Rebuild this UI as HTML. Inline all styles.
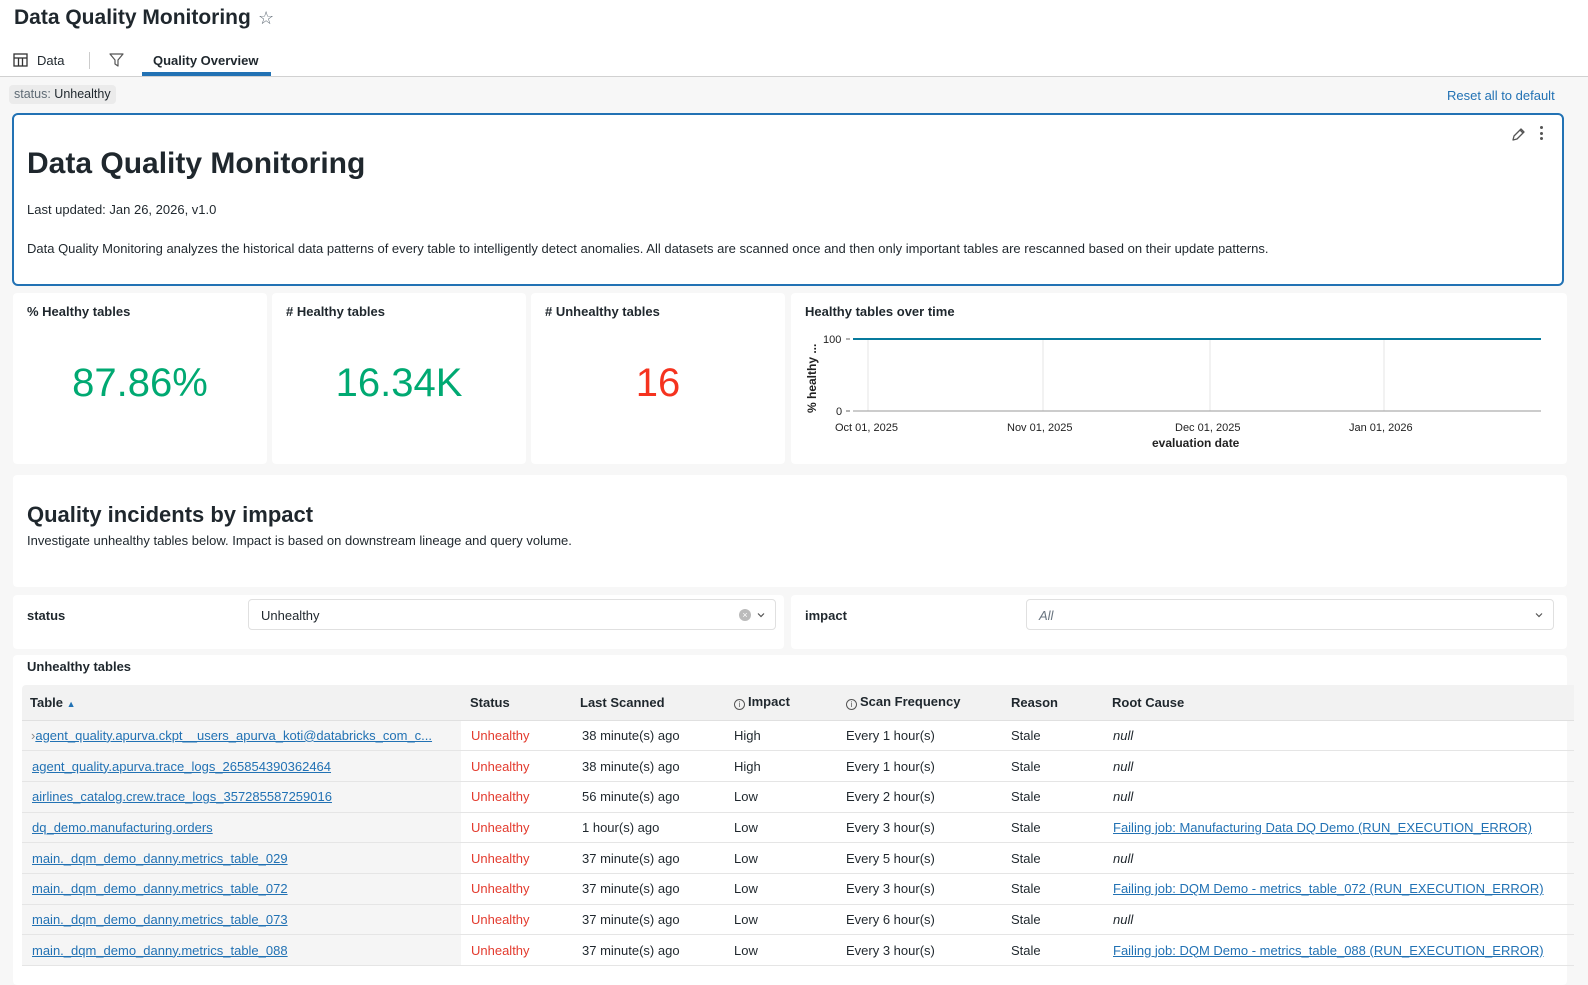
<!DOCTYPE html>
<html><head><meta charset="utf-8"><style>
*{box-sizing:border-box;margin:0;padding:0}
body{width:1588px;height:976px;overflow:hidden;background:#f7f7f7;font-family:"Liberation Sans",Arial,sans-serif;color:#1f272d;position:relative}
.abs{position:absolute}
.card{position:absolute;background:#fff;border-radius:4px}
.top{position:absolute;left:0;top:0;width:1588px;height:77px;background:#fff;border-bottom:1px solid #d1d1d1}
.lnk{color:#2272b4;text-decoration:underline}
table{border-collapse:collapse;font-size:13px}
td,th{height:30.7px;border-bottom:1px solid #e5e5e5;text-align:left;white-space:nowrap;overflow:hidden;vertical-align:middle}
th{height:35px;background:#f2f2f2;font-weight:bold;border-bottom:1px solid #e0e0e0}
td.c1{background:#f5f5f5}
.red{color:#e33b2e}
.ic{display:inline-block;width:11px;height:11px;border:1px solid #555;border-radius:50%;font-size:8px;line-height:9px;text-align:center;font-weight:normal;vertical-align:-1px;margin-right:3px;color:#555}
</style></head><body>
<div class="top">
  <div class="abs" style="left:14px;top:6px;font-size:21px;font-weight:bold;color:#1f272d">Data Quality Monitoring</div>
  <div class="abs" style="left:258px;top:8px;font-size:18px;color:#5f6b75">☆</div>
  <svg class="abs" style="left:13px;top:53px" width="15" height="14" viewBox="0 0 15 14"><rect x="1" y="1" width="13" height="12" fill="none" stroke="#333" stroke-width="1.3"/><line x1="1" y1="5" x2="14" y2="5" stroke="#333" stroke-width="1.3"/><line x1="5.5" y1="5" x2="5.5" y2="13" stroke="#333" stroke-width="1.3"/><line x1="9.5" y1="5" x2="9.5" y2="13" stroke="#333" stroke-width="1.3"/></svg>
  <div class="abs" style="left:37px;top:53px;font-size:13px">Data</div>
  <div class="abs" style="left:89px;top:52px;width:1px;height:17px;background:#ccc"></div>
  <svg class="abs" style="left:109px;top:53px" width="15" height="14" viewBox="0 0 15 14"><path d="M1 1h13L9 7v6L6 11V7z" fill="none" stroke="#555" stroke-width="1.2" stroke-linejoin="round"/></svg>
  <div class="abs" style="left:153px;top:53px;font-size:13px;font-weight:bold">Quality Overview</div>
  <div class="abs" style="left:142px;top:72px;width:129px;height:4px;background:#2272b4"></div>
</div>
<div class="abs" style="left:9px;top:85px;height:19px;padding:0 5px;background:#ebebeb;border-radius:4px;font-size:12.5px;line-height:19px"><span style="color:#5f6b75">status:</span> Unhealthy</div>
<div class="abs" style="left:1447px;top:88px;font-size:13px;color:#2272b4">Reset all to default</div>

<div class="card" style="left:12px;top:113px;width:1552px;height:173px;border:2px solid #2272b4;border-radius:6px">
  <div class="abs" style="left:13px;top:32px;font-size:30px;font-weight:bold">Data Quality Monitoring</div>
  <div class="abs" style="left:13px;top:87px;font-size:13px">Last updated: Jan 26, 2026, v1.0</div>
  <div class="abs" style="left:13px;top:126px;font-size:13px">Data Quality Monitoring analyzes the historical data patterns of every table to intelligently detect anomalies. All datasets are scanned once and then only important tables are rescanned based on their update patterns.</div>
  <svg class="abs" style="left:1496px;top:12px" width="16" height="16" viewBox="0 0 16 16"><path d="M3 13l1-4 7-7 3 3-7 7z M10 3l3 3" fill="none" stroke="#555" stroke-width="1.3" stroke-linejoin="round"/></svg>
  <div class="abs" style="left:1526px;top:11px;width:4px"><div style="width:3px;height:3px;border-radius:50%;background:#555;margin-bottom:2.5px"></div><div style="width:3px;height:3px;border-radius:50%;background:#555;margin-bottom:2.5px"></div><div style="width:3px;height:3px;border-radius:50%;background:#555"></div></div>
</div>

<div class="card" style="left:13px;top:293px;width:254px;height:171px"><div class="abs" style="left:14px;top:11px;font-size:13px;font-weight:bold">% Healthy tables</div><div class="abs" style="left:0;width:254px;text-align:center;top:68px;font-size:40px;color:#00a972">87.86%</div></div>
<div class="card" style="left:272px;top:293px;width:254px;height:171px"><div class="abs" style="left:14px;top:11px;font-size:13px;font-weight:bold"># Healthy tables</div><div class="abs" style="left:0;width:254px;text-align:center;top:68px;font-size:40px;color:#00a972">16.34K</div></div>
<div class="card" style="left:531px;top:293px;width:254px;height:171px"><div class="abs" style="left:14px;top:11px;font-size:13px;font-weight:bold"># Unhealthy tables</div><div class="abs" style="left:0;width:254px;text-align:center;top:68px;font-size:40px;color:#f5331f">16</div></div>
<div class="card" style="left:791px;top:293px;width:776px;height:171px">
  <div class="abs" style="left:14px;top:11px;font-size:13px;font-weight:bold">Healthy tables over time</div>
  <svg class="abs" style="left:0;top:0" width="776" height="171">
    <g stroke="#e5e5e5" stroke-width="1"><line x1="77" y1="46" x2="77" y2="118"/><line x1="252" y1="46" x2="252" y2="118"/><line x1="419" y1="46" x2="419" y2="118"/><line x1="593" y1="46" x2="593" y2="118"/></g>
    <line x1="62" y1="118" x2="750" y2="118" stroke="#999"/>
    <line x1="62" y1="46" x2="750" y2="46" stroke="#077a9d" stroke-width="2"/>
    <line x1="55" y1="46" x2="59" y2="46" stroke="#666"/><line x1="55" y1="118" x2="59" y2="118" stroke="#666"/>
    <g font-family="Liberation Sans" font-size="11" fill="#222"><text x="32" y="50">100</text><text x="45" y="122">0</text>
    <text x="44" y="138">Oct 01, 2025</text><text x="216" y="138">Nov 01, 2025</text><text x="384" y="138">Dec 01, 2025</text><text x="558" y="138">Jan 01, 2026</text>
    <text x="361" y="154" font-weight="bold" font-size="12">evaluation date</text>
    <text transform="translate(25,120) rotate(-90)" font-weight="bold" font-size="12">% healthy ...</text></g>
  </svg>
</div>

<div class="card" style="left:13px;top:475px;width:1554px;height:112px">
  <div class="abs" style="left:14px;top:27px;font-size:22px;font-weight:bold">Quality incidents by impact</div>
  <div class="abs" style="left:14px;top:58px;font-size:13px">Investigate unhealthy tables below. Impact is based on downstream lineage and query volume.</div>
</div>

<div class="card" style="left:13px;top:595px;width:771px;height:54px">
  <div class="abs" style="left:14px;top:13px;font-size:13px;font-weight:bold">status</div>
  <div class="abs" style="left:235px;top:4px;width:528px;height:31px;border:1px solid #e0e0e0;border-radius:4px;font-size:13px;padding:8px 12px">Unhealthy
    <div class="abs" style="left:490px;top:9px;width:12px;height:12px;border-radius:50%;background:#bbb;color:#fff;font-size:9px;line-height:12px;text-align:center">×</div>
    <svg class="abs" style="left:507px;top:10px" width="10" height="10" viewBox="0 0 10 10"><path d="M2 3.5l3 3 3-3" fill="none" stroke="#555" stroke-width="1.2"/></svg></div>
</div>
<div class="card" style="left:791px;top:595px;width:776px;height:54px">
  <div class="abs" style="left:14px;top:13px;font-size:13px;font-weight:bold">impact</div>
  <div class="abs" style="left:235px;top:4px;width:528px;height:31px;border:1px solid #e0e0e0;border-radius:4px;font-size:13px;padding:8px 12px;color:#6a7580;font-style:italic">All
    <svg class="abs" style="left:507px;top:10px" width="10" height="10" viewBox="0 0 10 10"><path d="M2 3.5l3 3 3-3" fill="none" stroke="#555" stroke-width="1.2"/></svg></div>
</div>

<div class="card" style="left:13px;top:655px;width:1554px;height:330px">
  <div class="abs" style="left:14px;top:4px;font-size:13px;font-weight:bold">Unhealthy tables</div>
  <table class="abs" style="left:9px;top:30px;width:1552px;table-layout:fixed">
    <colgroup><col style="width:439px"><col style="width:109px"><col style="width:152px"><col style="width:113px"><col style="width:164px"><col style="width:101px"><col></colgroup>
    <tr><th style="padding-left:8px;border-radius:4px 0 0 0">Table <span style="color:#2272b4;font-size:9px">▲</span></th><th style="padding-left:9px">Status</th><th style="padding-left:10px">Last Scanned</th><th style="padding-left:12px"><span class="ic">i</span>Impact</th><th style="padding-left:11px"><span class="ic">i</span>Scan Frequency</th><th style="padding-left:12px">Reason</th><th style="padding-left:12px">Root Cause</th></tr>
    <tr><td class="c1" style="padding-left:9px"><span style="color:#888">›</span><span class="lnk">agent_quality.apurva.ckpt__users_apurva_koti@databricks_com_c...</span></td><td class="red" style="padding-left:10px">Unhealthy</td><td style="padding-left:12px">38 minute(s) ago</td><td style="padding-left:12px">High</td><td style="padding-left:11px">Every 1 hour(s)</td><td style="padding-left:12px">Stale</td><td style="padding-left:13px;font-style:italic">null</td></tr>
    <tr><td class="c1" style="padding-left:10px"><span class="lnk">agent_quality.apurva.trace_logs_265854390362464</span></td><td class="red" style="padding-left:10px">Unhealthy</td><td style="padding-left:12px">38 minute(s) ago</td><td style="padding-left:12px">High</td><td style="padding-left:11px">Every 1 hour(s)</td><td style="padding-left:12px">Stale</td><td style="padding-left:13px;font-style:italic">null</td></tr>
    <tr><td class="c1" style="padding-left:10px"><span class="lnk">airlines_catalog.crew.trace_logs_357285587259016</span></td><td class="red" style="padding-left:10px">Unhealthy</td><td style="padding-left:12px">56 minute(s) ago</td><td style="padding-left:12px">Low</td><td style="padding-left:11px">Every 2 hour(s)</td><td style="padding-left:12px">Stale</td><td style="padding-left:13px;font-style:italic">null</td></tr>
    <tr><td class="c1" style="padding-left:10px"><span class="lnk">dq_demo.manufacturing.orders</span></td><td class="red" style="padding-left:10px">Unhealthy</td><td style="padding-left:12px">1 hour(s) ago</td><td style="padding-left:12px">Low</td><td style="padding-left:11px">Every 3 hour(s)</td><td style="padding-left:12px">Stale</td><td style="padding-left:13px"><span class="lnk">Failing job: Manufacturing Data DQ Demo (RUN_EXECUTION_ERROR)</span></td></tr>
    <tr><td class="c1" style="padding-left:10px"><span class="lnk">main._dqm_demo_danny.metrics_table_029</span></td><td class="red" style="padding-left:10px">Unhealthy</td><td style="padding-left:12px">37 minute(s) ago</td><td style="padding-left:12px">Low</td><td style="padding-left:11px">Every 5 hour(s)</td><td style="padding-left:12px">Stale</td><td style="padding-left:13px;font-style:italic">null</td></tr>
    <tr><td class="c1" style="padding-left:10px"><span class="lnk">main._dqm_demo_danny.metrics_table_072</span></td><td class="red" style="padding-left:10px">Unhealthy</td><td style="padding-left:12px">37 minute(s) ago</td><td style="padding-left:12px">Low</td><td style="padding-left:11px">Every 3 hour(s)</td><td style="padding-left:12px">Stale</td><td style="padding-left:13px"><span class="lnk">Failing job: DQM Demo - metrics_table_072 (RUN_EXECUTION_ERROR)</span></td></tr>
    <tr><td class="c1" style="padding-left:10px"><span class="lnk">main._dqm_demo_danny.metrics_table_073</span></td><td class="red" style="padding-left:10px">Unhealthy</td><td style="padding-left:12px">37 minute(s) ago</td><td style="padding-left:12px">Low</td><td style="padding-left:11px">Every 6 hour(s)</td><td style="padding-left:12px">Stale</td><td style="padding-left:13px;font-style:italic">null</td></tr>
    <tr><td class="c1" style="padding-left:10px"><span class="lnk">main._dqm_demo_danny.metrics_table_088</span></td><td class="red" style="padding-left:10px">Unhealthy</td><td style="padding-left:12px">37 minute(s) ago</td><td style="padding-left:12px">Low</td><td style="padding-left:11px">Every 3 hour(s)</td><td style="padding-left:12px">Stale</td><td style="padding-left:13px"><span class="lnk">Failing job: DQM Demo - metrics_table_088 (RUN_EXECUTION_ERROR)</span></td></tr>
  </table>
</div>
</body></html>
